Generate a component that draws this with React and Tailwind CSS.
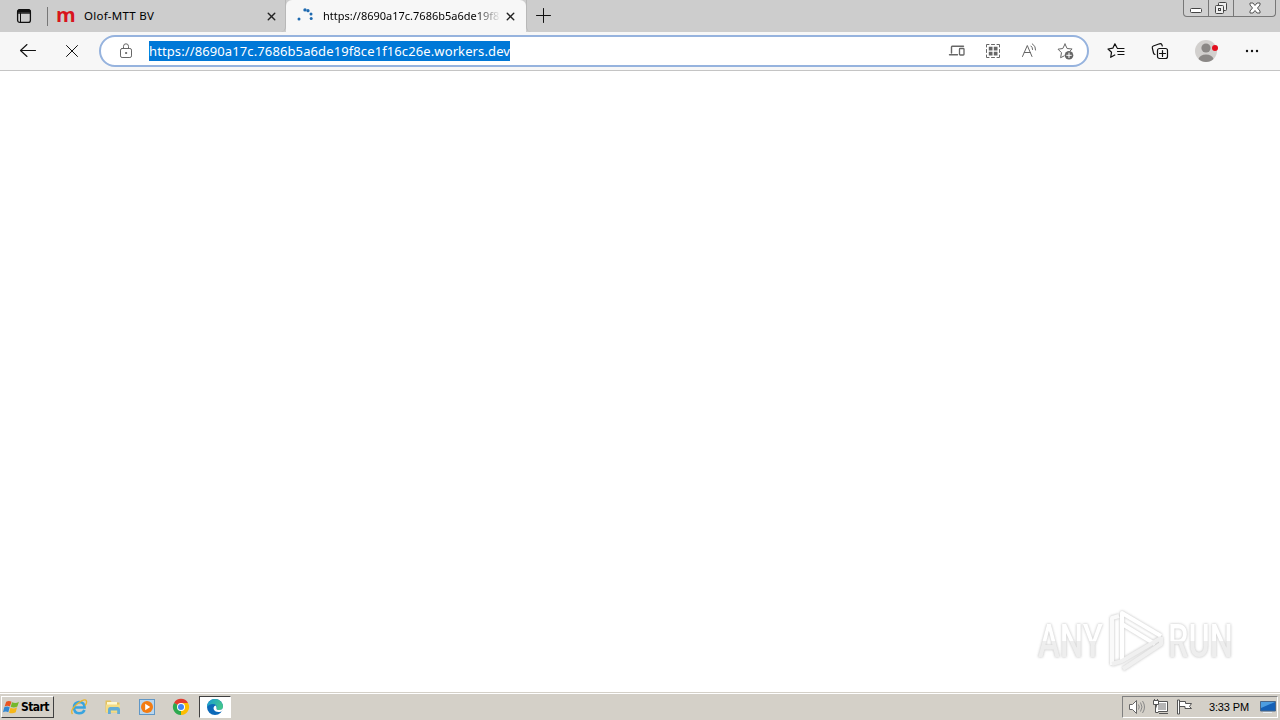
import { X } from 'lucide-react'

const URL = 'https://8690a17c.7686b5a6de19f8ce1f16c26e.workers.dev'
const TAB_TITLE = 'https://8690a17c.7686b5a6de19f8'

const Icon = ({ size = 16, className = '', children }) => (
  <svg
    width={size}
    height={size}
    viewBox={`0 0 ${size} ${size}`}
    fill="none"
    stroke="currentColor"
    strokeWidth="1"
    strokeLinecap="round"
    strokeLinejoin="round"
    className={`shrink-0 ${className}`}
  >
    {children}
  </svg>
)

const TabActionsIcon = () => (
  <Icon className="text-[#111]">
    <rect x="1.6" y="1.6" width="12.8" height="12.8" rx="2.2" strokeWidth="1.3" />
    <path d="M1.5 4.8V4A2.5 2.5 0 0 1 4 1.5h8A2.5 2.5 0 0 1 14.5 4v.8Z" fill="currentColor" />
    <path d="M4.5 5v9" />
  </Icon>
)

const LoadingDots = () => (
  <svg width="16" height="16" viewBox="0 0 16 16" fill="#1f6ab0" className="shrink-0">
    <circle cx="2" cy="11" r="1.5" />
    <circle cx="8" cy="1.9" r="1.7" />
    <circle cx="11" cy="2.7" r="1.6" />
    <circle cx="14" cy="6" r="1.5" />
    <circle cx="14.2" cy="10.5" r="1.5" />
  </svg>
)

const TabStrip = () => (
  <div className="flex h-8 bg-[#cdcdcd]">
    <div className="flex w-[47px] items-center pl-4">
      <TabActionsIcon />
    </div>
    <div className="mt-[7px] h-[19px] w-px bg-[#777]" />
    <div className="flex w-[238px] items-center rounded-br-[5px] border-r border-[#b8b8b8] pl-[8px] pr-[7px]">
      <span className="h-[22px] w-[19px] font-['Open_Sans',sans-serif] text-[20px] font-bold leading-[20px] text-[#d8141c]">m</span>
      <span className="ml-[9px] flex-1 whitespace-nowrap font-['Noto_Sans',sans-serif] text-[11.5px] tracking-[0.25px] text-black">Olof-MTT BV</span>
      <X size={13} strokeWidth={2.6} className="text-[#222]" />
    </div>
    <div className="flex w-[240px] items-center rounded-t-[6px] bg-[#f7f7f7] pl-[11px] pr-[9px]">
      <LoadingDots />
      <span className="ml-[10px] whitespace-nowrap font-['Noto_Sans',sans-serif] text-[11px] text-black [mask-image:linear-gradient(to_right,black_86%,transparent_101%)]">
        {TAB_TITLE}
      </span>
      <X size={13} strokeWidth={2.6} className="ml-auto shrink-0 text-[#222]" />
    </div>
    <div className="flex flex-1 items-center rounded-bl-[5px] border-l border-[#b8b8b8] pl-[8px]">
      <Icon size={17} className="mb-px text-[#111]">
        <path d="M8.5 1.5v14M1.5 8.5h14" />
      </Icon>
    </div>
    <div className="mr-1 flex h-[17px] w-[93px] rounded-b-[4px] border border-t-0 border-[#777] bg-[#d0d0d0] text-[#444]">
      <div className="flex w-[25px] items-center justify-center border-r border-[#777]">
        <svg width="14" height="16" viewBox="0 0 14 16" fill="#fff" stroke="#444">
          <rect x="1.5" y="8.5" width="11" height="4" rx="1" />
        </svg>
      </div>
      <div className="flex w-[25px] items-center justify-center border-r border-[#777]">
        <svg width="14" height="14" viewBox="0 0 14 14" fill="#eee" stroke="#444">
          <rect x="4.5" y="1.5" width="8" height="8" rx="1" />
          <rect x="1.5" y="4.5" width="8" height="8" rx="1" />
          <rect x="4.5" y="7.5" width="2" height="2" />
        </svg>
      </div>
      <div className="flex flex-1 items-center justify-center">
        <svg width="14" height="12" viewBox="0 0 14 12" fill="#fff" stroke="#555">
          <path d="M2 1h3l2 2.5L9 1h3v2L9.5 6l2.5 3v2H9L7 8.5 5 11H2V9l2.5-3L2 3Z" />
        </svg>
      </div>
    </div>
  </div>
)

const AddressBar = () => (
  <div className="flex h-8 w-[990px] items-center rounded-full border-2 border-[#96b3de] bg-white pl-[17px] pr-[13px] text-[#666]">
    <Icon size={16}>
      <rect x="2.5" y="5.5" width="11" height="9" rx="1.6" />
      <path d="M5.5 5.3V3.3a2.5 2.5 0 0 1 5 0v2" />
      <circle cx="8" cy="10" r=".6" fill="currentColor" />
    </Icon>
    <span className="ml-[15px] h-[20px] w-[361px] whitespace-nowrap bg-[#0078d7] font-['Noto_Sans',sans-serif] text-[13px] leading-[20px] tracking-[0.11px] text-white">
      {URL}
    </span>
    <div className="ml-auto flex items-center gap-[18px]">
      <Icon size={18}>
        <path d="M3.5 11V5A1 1 0 0 1 4.5 4.3H15.5M1.5 12.8H9.5" strokeWidth="1.4" />
        <rect x="11.5" y="6.5" width="4.5" height="6.5" rx=".8" strokeWidth="1.3" />
      </Icon>
      <Icon size={18}>
        <path d="M2.5 5V2.5H5M13 2.5h2.5V5M15.5 13v2.5H13M5 15.5H2.5V13M7.5 2.5h3M7.5 15.5h3M2.5 7.5v3M15.5 7.5v3" />
        <path d="M4.8 4.8h3.7v3.7H4.8ZM9.8 4.8h3.7v3.7H9.8ZM4.8 9.8h3.7v3.7H4.8ZM9.8 9.8h3.7v3.7H9.8Z" fill="currentColor" stroke="none" />
      </Icon>
      <Icon size={18}>
        <path d="M2.5 14.5 7.3 3.5 12 14.5M4.3 10.5h6" />
        <path d="M11 4Q12.6 5 12.6 7.5M12.3 1.8Q16 4 15.6 8" />
      </Icon>
      <Icon size={18}>
        <path d="m9 2 2.1 4.5 5 .5-2 2M9 2 6.8 6.500 2 7.2l3.5 3.5-.9 5L8 14" />
        <circle cx="13" cy="13.3" r="4.3" fill="currentColor" stroke="none" />
        <path d="M13 11v4.6M10.7 13.3h4.6" stroke="white" />
      </Icon>
    </div>
  </div>
)

const Toolbar = () => (
  <div className="flex h-[39px] items-center border-b border-[#c4c4c4] bg-[#f7f7f7] text-[#111]">
    <div className="flex w-[99px] items-center gap-[27px] pl-[19px]">
      <Icon size={18}>
        <path d="M16.5 8.5H1.5M8 2.5 1.5 8.5l6.5 6" strokeWidth="1.1" />
      </Icon>
      <Icon size={16}>
        <path d="m2.5 2.5 11 11M13.5 2.5l-11 11" />
      </Icon>
    </div>
    <AddressBar />
    <div className="flex flex-1 items-center pl-[18px]">
      <Icon size={18}>
        <path d="M10 5.8 7.9 1.8 5.8 6.2 1 7l3.5 3.3-.8 5L7.8 13M10.5 6.5h6.5M10.5 9.5h6.5M11 12.5h6" strokeWidth="1.2" />
      </Icon>
      <Icon size={18} className="ml-[26px]">
        <path d="M4 12.5Q2.8 12.3 2.5 11L1.3 5.8Q1 4.5 2.3 4L8.5 1.8Q10.2 1.3 10.8 2.6L11.3 4" strokeWidth="1.2" />
        <rect x="6.5" y="6.5" width="10" height="10" rx="2" strokeWidth="1.2" />
        <path d="M11.5 8.5v6M8.5 11.5h6" strokeWidth="1.2" />
      </Icon>
      <svg width="24" height="24" viewBox="0 0 24 24" className="ml-[26px] shrink-0">
        <circle cx="11" cy="12" r="11" fill="#d2d0ce" />
        <circle cx="11" cy="9" r="4.6" fill="#8b8886" />
        <path d="M3.5 20Q5 15.5 11 15.5T18.5 20Q15.5 23 11 23T3.5 20" fill="#8b8886" />
        <circle cx="20" cy="9" r="3" fill="#e3101f" />
      </svg>
      <svg width="14" height="4" viewBox="0 0 14 4" fill="#111" className="ml-[26px] shrink-0">
        <circle cx="2" cy="2" r="1.2" />
        <circle cx="7" cy="2" r="1.2" />
        <circle cx="12" cy="2" r="1.2" />
      </svg>
    </div>
  </div>
)

const Watermark = () => (
  <div className="flex h-[66px] w-[196px] items-center font-['Roboto',sans-serif] text-[47px] leading-[66px] [filter:drop-shadow(0_0_1px_#cfcfcf)_drop-shadow(0_0_1px_#e6e6e6)]">
    <div className="w-[68px]">
      <span className="inline-block origin-left scale-x-[0.7] bg-linear-to-b from-white from-50% to-[#eeeeee] to-50% bg-clip-text font-medium text-transparent">ANY</span>
    </div>
    <svg width="62" height="66" viewBox="0 0 62 66" fill="none" strokeWidth="4" strokeLinejoin="round" className="shrink-0">
      <path d="M13 8 6 10V57" stroke="#fafafa" />
      <path d="M16 52V5L55 28" stroke="#fff" />
      <path d="M16 16 49 36" stroke="#fff" />
      <path d="m6 56 10-3 39-23M17 61 55 36V29" stroke="#f0f0f0" />
    </svg>
    <div className="w-[64px]">
      <span className="inline-block origin-left scale-x-[0.69] bg-linear-to-b from-white from-50% to-[#eeeeee] to-50% bg-clip-text font-medium text-transparent">RUN</span>
    </div>
  </div>
)

const StartButton = () => (
  <div className="flex h-[22px] w-[53px] items-center border border-b-[#404040] border-l-white border-r-[#404040] border-t-white bg-[#d4d0c8] pl-px">
    <svg width="17" height="16" viewBox="0 0 16 15" className="shrink-0">
      <path d="M3 2.5Q5.5 1 8 2.5L6.5 7Q4 5.5 1.5 7Z" fill="#e95420" />
      <path d="M8.5 3Q12 4.5 15 2.5L13.5 7Q11 8.5 7.2 7.5Z" fill="#75b82b" />
      <path d="M1.2 7.8Q3.8 6.3 6.3 7.8L5 12.5Q2.5 11 0 12.5Z" fill="#3288d2" />
      <path d="M7 8.3Q10 9.8 13.2 7.8L12 12.5Q9 14 5.7 12.8Z" fill="#f6b718" />
    </svg>
    <span className="ml-px mt-px font-['DejaVu_Sans_Condensed','DejaVu_Sans',sans-serif] text-[12px] font-bold leading-[16px] tracking-[-0.6px] text-black">Start</span>
  </div>
)

const InternetExplorerIcon = () => (
  <svg width="18" height="18" viewBox="0 0 18 18" fill="none" className="shrink-0">
    <path d="M14.5 12Q13 15.5 9 15.3Q4 15 4 9.5Q4 4.5 9 4Q14.5 4 14.5 9.5H5" stroke="#38a4df" strokeWidth="2.6" />
    <path d="M2.5 16Q-.5 12 8 5.2Q16-.5 16.5 3.5Q17 5 15 7.5" stroke="#e9b52e" strokeWidth="1.3" />
  </svg>
)

const ExplorerIcon = () => (
  <svg width="18" height="18" viewBox="0 0 18 18" className="shrink-0">
    <path d="M1.5 2.5h5l1.5 2h7.5v10h-14Z" fill="#e3c25f" />
    <path d="M3 4h10v3H3Z" fill="#fff8cf" />
    <path d="M2 6.5h14v8H2Z" fill="#f4dc84" />
    <path d="M4 16v-4.5Q4 9 6 9h8q2 0 2 2.5V16h-2.8v-3.5H6.8V16Z" fill="#62acd6" />
  </svg>
)

const MediaPlayerIcon = () => (
  <svg width="18" height="18" viewBox="0 0 18 18" className="shrink-0">
    <rect x="1.5" y="1.5" width="15" height="15" fill="#b9d6ee" stroke="#6097c6" />
    <circle cx="9" cy="9" r="6" fill="#f37c12" />
    <path d="m7.2 5.8 5 3.2-5 3.2Z" fill="#fff" />
  </svg>
)

const ChromeIcon = () => (
  <svg width="18" height="18" viewBox="0 0 18 18" className="shrink-0">
    <path d="M9 9 2 5A8 8 0 0 1 16 5Z" fill="#e33b2e" />
    <path d="M9 9 2 5A8 8 0 0 0 9 17Z" fill="#2da94f" />
    <path d="M9 9 9 17A8 8 0 0 0 16 5H9Z" fill="#fdbd00" />
    <path d="M2 5 5.5 11 9 9Z" fill="#2da94f" />
    <circle cx="9" cy="9" r="4" fill="#fff" />
    <circle cx="9" cy="9" r="3" fill="#4285f4" />
  </svg>
)

const EdgeIcon = () => (
  <svg width="18" height="18" viewBox="0 0 18 18" className="shrink-0">
    <defs>
      <linearGradient id="edgeTop" x1="0" y1="0" x2="1" y2=".4">
        <stop offset="0" stopColor="#169bd7" />
        <stop offset="1" stopColor="#42c58e" />
      </linearGradient>
    </defs>
    <circle cx="9" cy="9" r="8" fill="#0c69b9" />
    <path d="M1 9A8 8 0 0 1 17 9Q17 12 13 12Q10 12 10.5 10Q11 6 7 6Q3 6 1 9Z" fill="url(#edgeTop)" />
    <path d="M9.5 7.5Q6.5 9 8 12Q10 15 15.5 13.5L18 11V9L17 9Q17 12 13 12Q10 12 10.5 10Q10.5 8 9.5 7.5Z" fill="#fff" />
  </svg>
)

const Tray = () => (
  <div className="ml-auto mr-[2px] flex h-[22px] w-[156px] items-center border border-b-white border-l-[#808080] border-r-white border-t-[#808080] pl-[5px]">
    <svg width="18" height="18" viewBox="0 0 18 18" fill="#fff" stroke="#666" className="shrink-0">
      <path d="M1.5 6.5h3l4-4v13l-4-4h-3Z" />
      <path d="M10.5 6.5q1.5 2.5 0 5M12.500 4.5q3 4.5 0 9M14.5 3q4 6 0 12" fill="none" stroke="#888" />
    </svg>
    <svg width="18" height="18" viewBox="0 0 18 18" fill="#fff" stroke="#555" className="ml-[6px] shrink-0">
      <path d="M4.5 3.5h11v10h-11ZM7 15.5h9" />
      <path d="M6 5h8v7H6Z" fill="#b5b5b5" stroke="none" />
      <path d="M1.5 2.5h5v4h-5ZM2.5 1v2M5.5 1v2M3.5 6.5v8h3" />
    </svg>
    <svg width="18" height="18" viewBox="0 0 18 18" fill="#fff" stroke="#555" className="ml-[6px] shrink-0">
      <path d="M1.5 2v14h2V2ZM3.5 3.5h6v2h6l-2 3 2 2H9v-2H3.5Z" />
    </svg>
    <span className="ml-[15px] mt-px w-[44px] whitespace-nowrap font-['Liberation_Sans',sans-serif] text-[11px] tracking-[-0.15px] text-black">3:33 PM</span>
    <svg width="16" height="14" viewBox="0 0 16 14" className="ml-[7px] shrink-0">
      <path d="M.5 1.5h15V11H.5Z" fill="#1560b6" stroke="#4a6688" />
      <path d="M1 2h14L1 8Z" fill="#4d9de0" />
      <path d="M3 12.5h9" stroke="#e8eef4" />
    </svg>
  </div>
)

const Taskbar = () => (
  <div className="flex h-[28px] items-center border-t border-[#d4d0c8] bg-[#d4d0c8] pl-px shadow-[inset_0_1px_0_#fff]">
    <StartButton />
    <div className="ml-[16px] flex items-center gap-[16px]">
      <InternetExplorerIcon />
      <ExplorerIcon />
      <MediaPlayerIcon />
      <ChromeIcon />
    </div>
    <div className="ml-[9px] flex h-[22px] w-[32px] items-center justify-center border border-b-white border-l-[#404040] border-r-white border-t-[#404040] bg-white">
      <EdgeIcon />
    </div>
    <Tray />
  </div>
)

const App = () => (
  <div className="flex h-[720px] w-[1280px] flex-col overflow-hidden bg-white">
    <TabStrip />
    <Toolbar />
    <div className="flex flex-1 items-end justify-end pb-[18px] pr-[46px]">
      <Watermark />
    </div>
    <Taskbar />
  </div>
)

export default App
